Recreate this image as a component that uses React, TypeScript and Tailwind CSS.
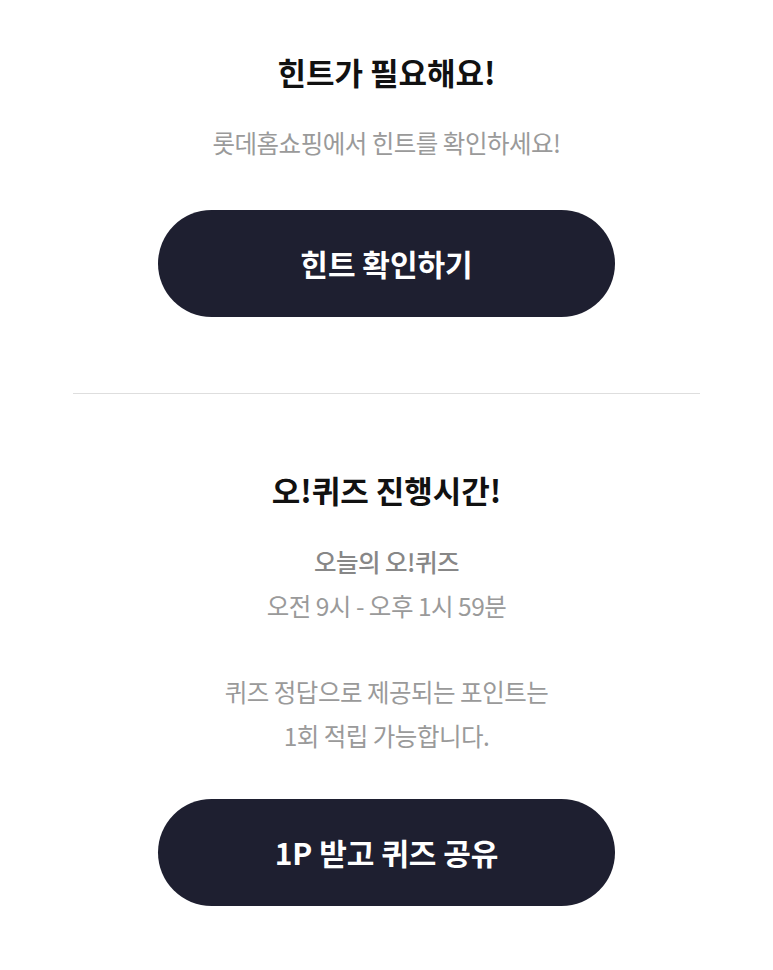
export default function App() {
  return (
    <div
      className="min-h-[970px] w-full bg-white flex flex-col items-center"
      style={{ fontFamily: '"Noto Sans CJK KR", "Noto Sans", sans-serif' }}
    >
      {/* 힌트 */}
      <h2 className="mt-[52px] text-[31px] leading-[40px] font-bold text-[#111]">
        힌트가 필요해요!
      </h2>
      <p className="mt-[31px] text-[24.5px] leading-[40px] text-[#9a9a9a] tracking-[-0.5px]">
        롯데홈쇼핑에서 힌트를 확인하세요!
      </p>
      <button
        type="button"
        className="mt-[47px] h-[107px] w-[457px] rounded-full bg-[#1e1f30] text-white text-[30px] font-bold"
      >
        힌트 확인하기
      </button>

      <div className="mt-[76px] h-px w-[627px] bg-[#dedede]" />

      {/* 오!퀴즈 */}
      <h2 className="mt-[76px] text-[31px] leading-[40px] font-bold text-[#111]">
        오!퀴즈 진행시간!
      </h2>
      <div className="mt-[30px] flex flex-col items-center text-[24.5px] leading-[44px] text-[#9a9a9a] tracking-[-0.5px]">
        <p className="font-medium text-[#878787]">오늘의 오!퀴즈</p>
        <p>오전 9시 - 오후 1시 59분</p>
        <p className="mt-[42px]">퀴즈 정답으로 제공되는 포인트는</p>
        <p>1회 적립 가능합니다.</p>
      </div>
      <button
        type="button"
        className="mt-[41px] h-[107px] w-[457px] rounded-full bg-[#1e1f30] text-white text-[30px] font-bold"
      >
        1P 받고 퀴즈 공유
      </button>
    </div>
  );
}
